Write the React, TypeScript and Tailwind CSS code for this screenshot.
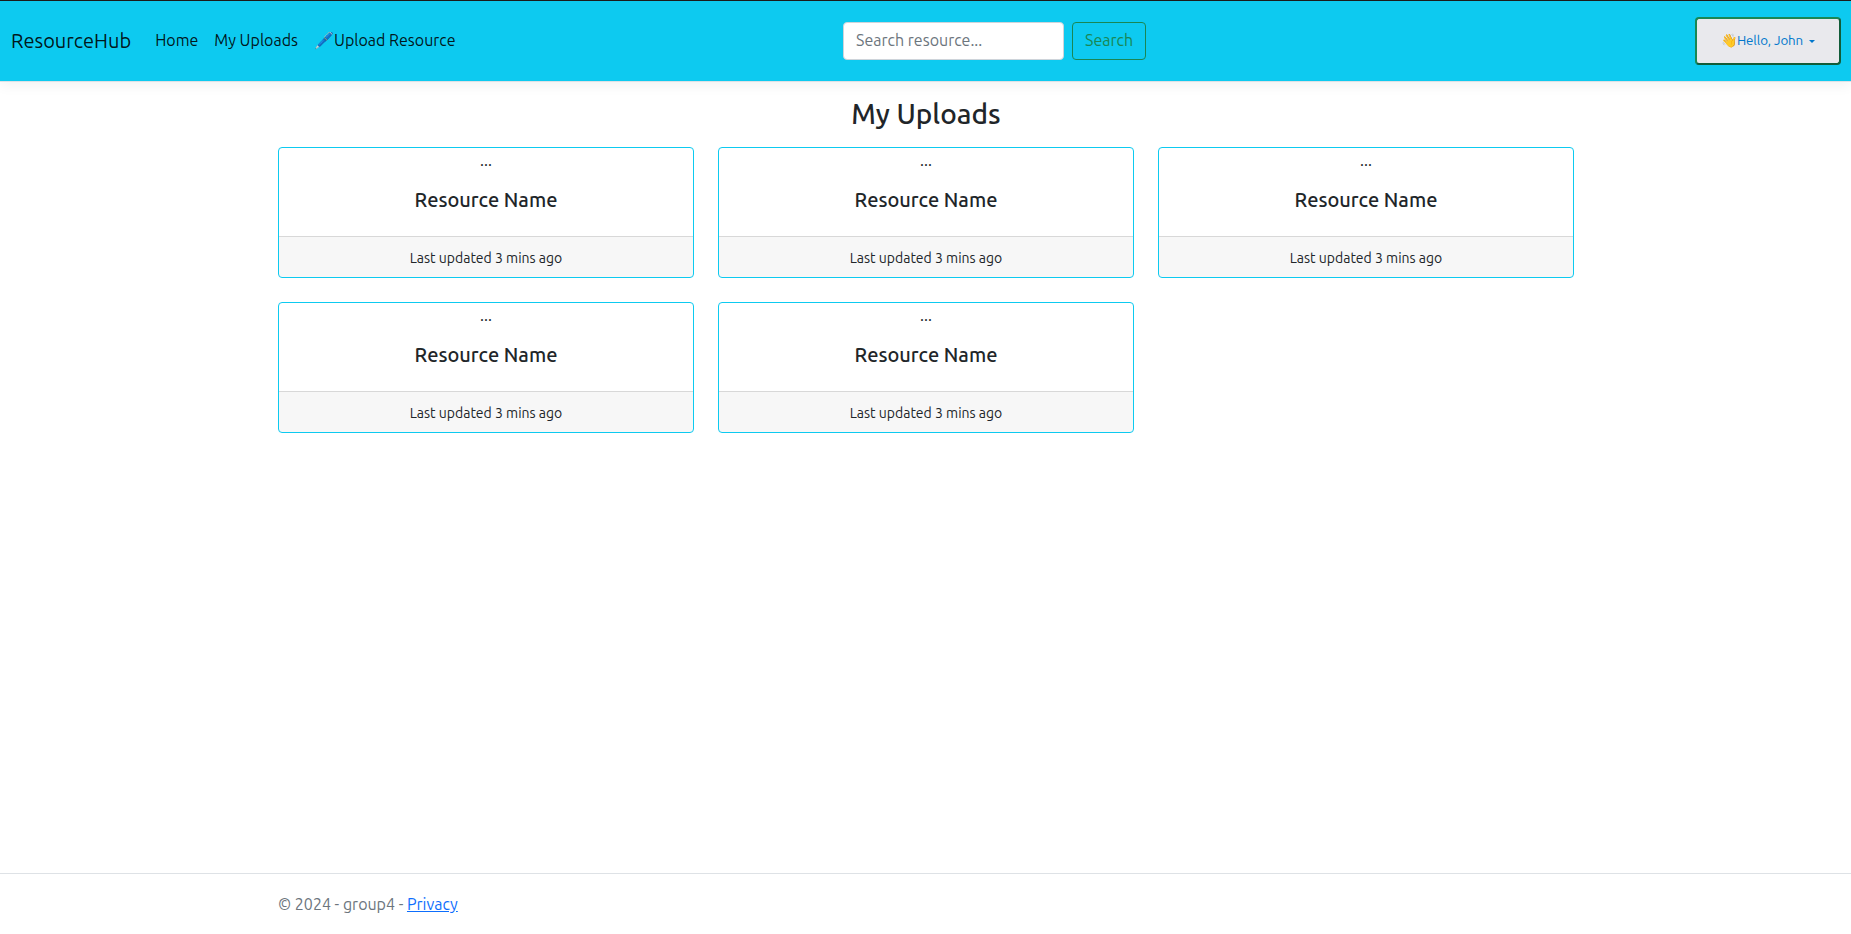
const uploads = [1, 2, 3, 4, 5].map((id) => ({
  id,
  name: "Resource Name",
  updated: "Last updated 3 mins ago",
}));

function Navbar() {
  return (
    <header className="flex h-[82px] items-center border-t border-b border-t-[#1b1b1b] border-b-[#dee2e6] bg-[#0dcaf0] pr-[10px] pl-[11px] shadow-[0_4px_12px_rgba(0,0,0,0.05)]">
      <a href="#" className="mr-4 text-[20px] leading-[30px] text-black/90">
        ResourceHub
      </a>
      <nav className="flex flex-1 pb-0.5 text-black/90">
        <a href="#" className="p-2">Home</a>
        <a href="#" className="p-2">My Uploads</a>
        <a href="#" className="p-2">🖊️Upload Resource</a>
      </nav>
      <form className="flex w-[304px] gap-2 pl-px">
        <input
          type="search"
          placeholder="Search resource..."
          className="h-[38px] w-[221px] rounded border border-[#ced4da] bg-white px-3 pt-[5px] pb-[7px] text-[#212529] placeholder:text-[#6c757d] placeholder:opacity-100"
        />
        <button
          type="button"
          className="h-[38px] w-[74px] shrink-0 rounded border border-[#198754] pb-0.5 text-[#198754]"
        >
          Search
        </button>
      </form>
      <div className="flex flex-1 justify-end">
        <button
          type="button"
          className="flex h-[48px] w-[146px] items-center justify-center rounded border-2 border-t-[#198754] border-r-[#115c39] border-b-[#115c39] border-l-[#198754] bg-[#e9e9ed] text-[13.333px] text-[#0077cc]"
        >
          <span className="-mr-px">👋</span>
          <span className="tracking-[-0.1px]">Hello, John</span>
          <span className="ml-[6px] h-0 w-0 border-x-[3px] border-t-[3px] border-x-transparent border-t-[#0077cc]" />
        </button>
      </div>
    </header>
  );
}

function ResourceCard({ name, updated }: { name: string; updated: string }) {
  return (
    <article className="overflow-hidden rounded border border-[#0dcaf0] bg-white text-center">
      <div className="h-6 pl-px">...</div>
      <div className="px-4 pt-4 pb-6">
        <h5 className="pl-px text-[20px] leading-6 font-medium">{name}</h5>
      </div>
      <div className="h-[41px] border-t border-black/[.125] bg-black/[.03] px-4 py-2">
        <small className="pl-px text-[14px]">{updated}</small>
      </div>
    </article>
  );
}

export default function App() {
  return (
    <div className="flex h-[934px] flex-col bg-white font-['Ubuntu','Noto_Sans',sans-serif] text-[16px] leading-6 text-[#212529]">
      <Navbar />
      <main className="mx-auto w-[1296px] flex-1 pt-[15px]">
        <h3 className="mb-[17px] pl-px text-center text-[28px] leading-[33px] font-medium">My Uploads</h3>
        <div className="grid grid-cols-3 gap-6">
          {uploads.map((u) => (
            <ResourceCard key={u.id} name={u.name} updated={u.updated} />
          ))}
        </div>
      </main>
      <footer className="border-t border-[#dee2e6] leading-[60px] text-[#6c757d]">
        <div className="mx-auto w-[1295px]">
          © 2024 - group4 -{" "}
          <a href="#" className="text-[#0d6efd] underline">Privacy</a>
        </div>
      </footer>
    </div>
  );
}
